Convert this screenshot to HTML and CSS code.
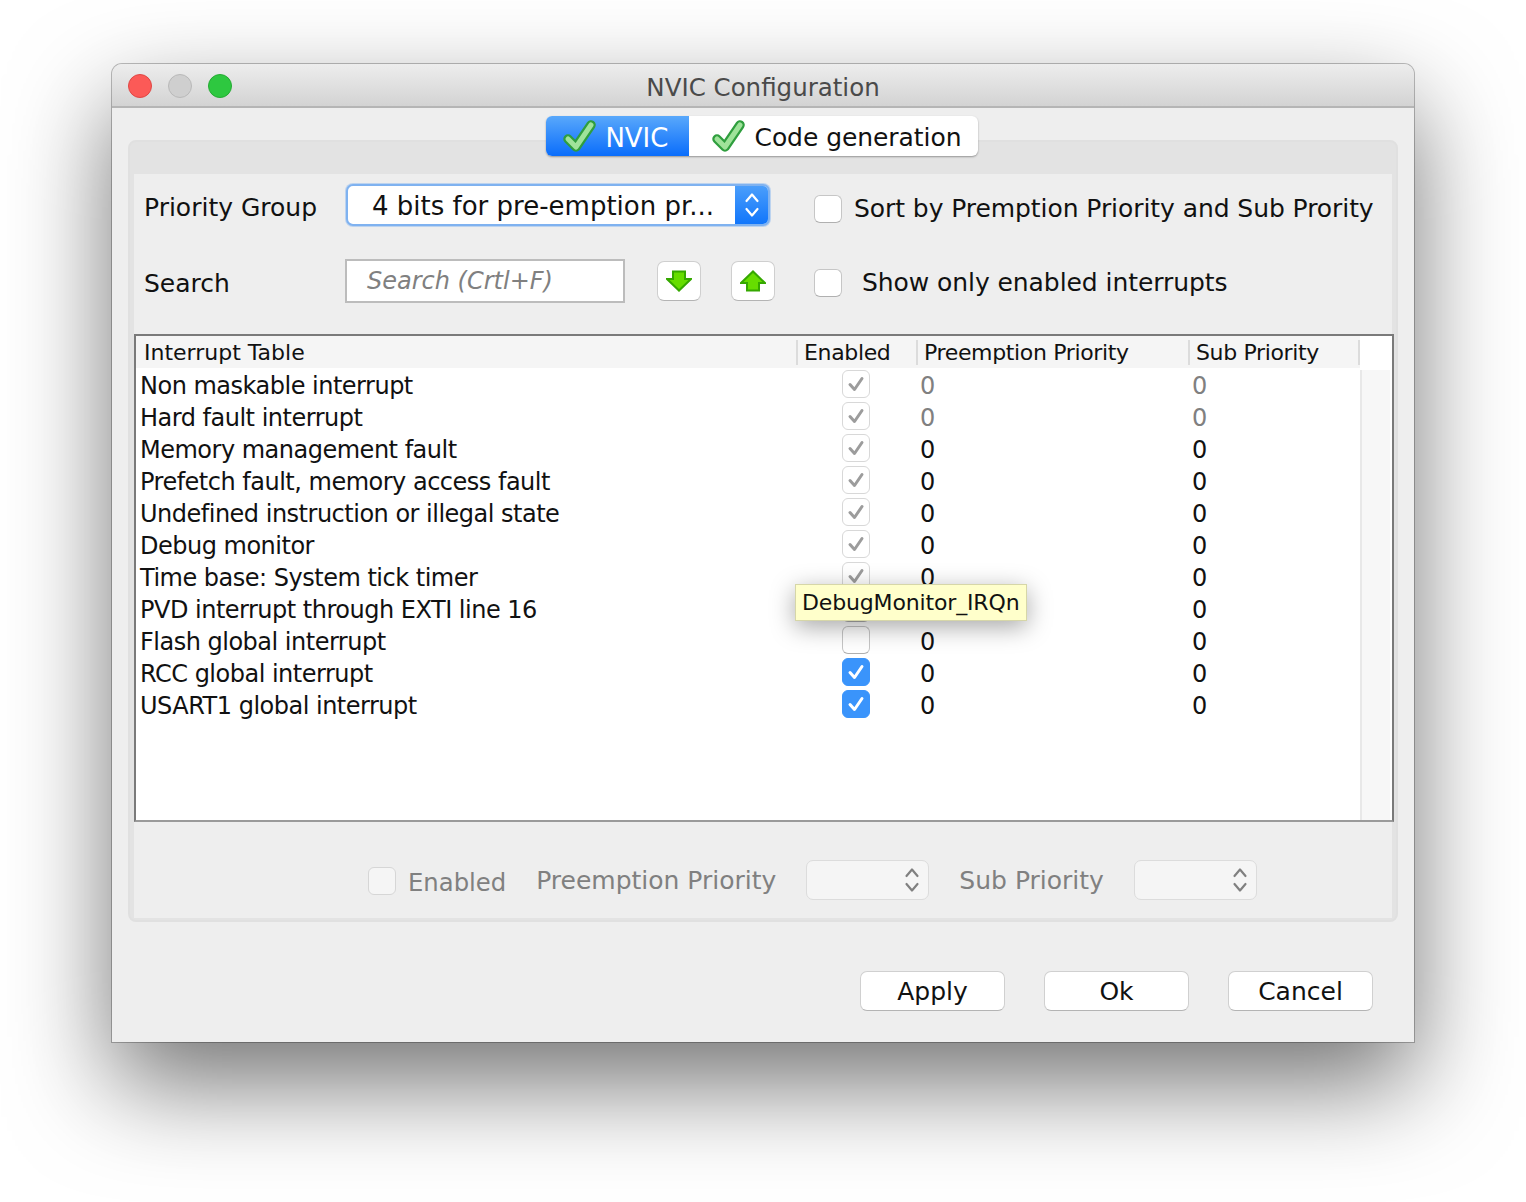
FILE: index.html
```html
<!DOCTYPE html>
<html lang="en">
<head>
  <meta charset="UTF-8" />
  <title>NVIC Configuration</title>
  <link rel="stylesheet" href="styles.css">
</head>
<body>
  <svg class="defs" width="0" height="0">
    <symbol id="tick" viewBox="0 0 34 34">
      <path d="M5 20 L13 28 L28 6" fill="none" stroke="#2f9e3e" stroke-width="9.5" stroke-linecap="round" stroke-linejoin="round"/>
      <path d="M5 20 L13 28 L28 6" fill="none" stroke="#9fe39a" stroke-width="5" stroke-linecap="round" stroke-linejoin="round"/>
    </symbol>
    <symbol id="mark" viewBox="0 0 20 20">
      <path d="M4 10.5 L8.5 15.5 L16 4.5" fill="none" stroke="currentColor" stroke-width="3" stroke-linecap="round" stroke-linejoin="round"/>
    </symbol>
    <symbol id="updown" viewBox="0 0 16 30">
      <path d="M2.5 11 L8 4.5 L13.5 11 M2.5 19 L8 25.5 L13.5 19" fill="none" stroke="currentColor" stroke-width="2.2" stroke-linecap="round" stroke-linejoin="round"/>
    </symbol>
  </svg>

  <div class="window">
    <div class="titlebar">
      <div class="lights">
        <span class="light red"></span>
        <span class="light grey"></span>
        <span class="light green"></span>
      </div>
      <div class="title">NVIC Configuration</div>
    </div>

    <div class="content">
      <div class="panel">
        <div class="tabs">
          <div class="tab active"><svg class="tab-icon"><use href="#tick"/></svg>NVIC</div>
          <div class="tab"><svg class="tab-icon"><use href="#tick"/></svg>Code generation</div>
        </div>

        <div class="inner">
          <div class="controls">
            <div class="label">Priority Group</div>
            <div class="combo">
              <span class="combo-text">4 bits for pre-emption pr...</span>
              <span class="combo-btn"><svg class="updown"><use href="#updown"/></svg></span>
            </div>
            <div class="box-option first">
              <span class="check"></span>
              <span>Sort by Premption Priority and Sub Prority</span>
            </div>

            <div class="label">Search</div>
            <div class="search-group">
              <div class="search">Search (Crtl+F)</div>
              <button class="arrow-btn">
                <svg width="26" height="22" viewBox="0 0 26 22"><path d="M7 1.5 H19 V9 H25 L13 20.5 L1 9 H7 Z" fill="#66dd00" stroke="#35a800" stroke-width="2"/></svg>
              </button>
              <button class="arrow-btn">
                <svg width="26" height="22" viewBox="0 0 26 22"><path d="M7 20.5 H19 V13 H25 L13 1.5 L1 13 H7 Z" fill="#66dd00" stroke="#35a800" stroke-width="2"/></svg>
              </button>
            </div>
            <div class="box-option second">
              <span class="check"></span>
              <span class="wide-gap">Show only enabled interrupts</span>
            </div>
          </div>

          <div class="table">
            <div class="thead">
              <div class="th first">Interrupt Table</div>
              <div class="th">Enabled</div>
              <div class="th">Preemption Priority</div>
              <div class="th">Sub Priority</div>
            </div>
            <div class="tbody">
              <div class="rows">
                <div class="row fixed"><span>Non maskable interrupt</span><span class="cell-check"><span class="check sm off"><svg><use href="#mark"/></svg></span></span><span class="num">0</span><span class="num">0</span></div>
                <div class="row fixed"><span>Hard fault interrupt</span><span class="cell-check"><span class="check sm off"><svg><use href="#mark"/></svg></span></span><span class="num">0</span><span class="num">0</span></div>
                <div class="row"><span>Memory management fault</span><span class="cell-check"><span class="check sm off"><svg><use href="#mark"/></svg></span></span><span class="num">0</span><span class="num">0</span></div>
                <div class="row"><span>Prefetch fault, memory access fault</span><span class="cell-check"><span class="check sm off"><svg><use href="#mark"/></svg></span></span><span class="num">0</span><span class="num">0</span></div>
                <div class="row"><span>Undefined instruction or illegal state</span><span class="cell-check"><span class="check sm off"><svg><use href="#mark"/></svg></span></span><span class="num">0</span><span class="num">0</span></div>
                <div class="row"><span>Debug monitor</span><span class="cell-check"><span class="check sm off"><svg><use href="#mark"/></svg></span></span><span class="num">0</span><span class="num">0</span></div>
                <div class="row"><span>Time base: System tick timer</span><span class="cell-check"><span class="check sm off"><svg><use href="#mark"/></svg></span></span><span class="num">0</span><span class="num">0</span></div>
                <div class="row"><span>PVD interrupt through EXTI line 16</span><span class="cell-check"><span class="check sm"></span></span><span class="num"></span><span class="num">0</span></div>
                <div class="row"><span>Flash global interrupt</span><span class="cell-check"><span class="check sm"></span></span><span class="num">0</span><span class="num">0</span></div>
                <div class="row"><span>RCC global interrupt</span><span class="cell-check"><span class="check sm on"><svg><use href="#mark"/></svg></span></span><span class="num">0</span><span class="num">0</span></div>
                <div class="row"><span>USART1 global interrupt</span><span class="cell-check"><span class="check sm on"><svg><use href="#mark"/></svg></span></span><span class="num">0</span><span class="num">0</span></div>
              </div>
              <div class="scrolltrack"></div>
            </div>
            <div class="tooltip">DebugMonitor_IRQn</div>
          </div>

          <div class="edit-row">
            <span class="check faded"></span>
            <span class="edit-enabled">Enabled</span>
            <span class="edit-label">Preemption Priority</span>
            <span class="spinner"><svg class="updown"><use href="#updown"/></svg></span>
            <span class="edit-label sub">Sub Priority</span>
            <span class="spinner"><svg class="updown"><use href="#updown"/></svg></span>
          </div>
        </div>
      </div>

      <div class="actions">
        <button class="btn">Apply</button>
        <button class="btn">Ok</button>
        <button class="btn">Cancel</button>
      </div>
    </div>
  </div>
</body>
</html>
```

FILE: styles.css
```css
* {
  box-sizing: border-box;
}
html, body {
  margin: 0;
  background: #fff;
}
body {
  padding: 64px 112px 0;
  height: 1202px;
  overflow: hidden;
  font-family: "DejaVu Sans", sans-serif;
  font-size: 25px;
  color: #111;
}
.defs {
  position: absolute;
}
.window {
  width: 1302px;
  height: 978px;
  background: #eee;
  border-radius: 10px 10px 0 0;
  box-shadow: 0 0 0 1px rgba(0,0,0,0.25), 0 42px 100px rgba(0,0,0,0.55);
}
.titlebar {
  height: 44px;
  position: relative;
  display: flex;
  align-items: center;
  justify-content: center;
  background: linear-gradient(#ededed, #d3d3d3);
  border-bottom: 2px solid #b5b5b5;
  border-radius: 10px 10px 0 0;
}
.lights {
  position: absolute;
  left: 16px;
  top: 10px;
  display: flex;
  gap: 16px;
}
.light {
  width: 24px;
  height: 24px;
  border-radius: 50%;
}
.light.red {
  background: #fc5a57;
  border: 1px solid #df4744;
}
.light.grey {
  background: #cfcfcf;
  border: 1px solid #b9b9b9;
}
.light.green {
  background: #2ec840;
  border: 1px solid #25ab33;
}
.title {
  color: #4a4a4a;
  font-size: 24.5px;
  padding-top: 5px;
}
.content {
  padding: 32px 16px 0;
}
.panel {
  height: 782px;
  background: #e3e3e3;
  border: 2px solid #e0e0e0;
  border-radius: 8px;
  padding: 0 4px 2px;
  display: flex;
  flex-direction: column;
}
.tabs {
  display: flex;
  align-self: center;
  height: 40px;
  margin-top: -26px;
  margin-left: -2px;
  background: #fff;
  border-radius: 6px;
  box-shadow: 0 1px 2px rgba(0,0,0,0.35);
}
.tab {
  display: flex;
  align-items: center;
  gap: 8px;
  padding: 3px 16px 0 23px;
  font-size: 25px;
  letter-spacing: -0.06px;
}
.tab.active {
  width: 143px;
  padding: 3px 0 0 17px;
  font-size: 26px;
  color: #fff;
  background: linear-gradient(#59a8fb, #0a6dfb);
  border-radius: 6px 0 0 6px;
}
.tab-icon {
  width: 34px;
  height: 34px;
  flex: none;
  margin-top: -3px;
}
.inner {
  flex: 1;
  margin-top: 18px;
  background: #eee;
  display: flex;
  flex-direction: column;
}
.controls {
  display: grid;
  grid-template-columns: 202px 468px 1fr;
  grid-template-rows: 42px 44px;
  row-gap: 33px;
  padding: 10px 0 0 10px;
  align-items: center;
}
.label {
  padding-top: 4px;
  white-space: nowrap;
}
.combo {
  height: 42px;
  width: 424px;
  display: flex;
  background: #fff;
  border: 2px solid #7fb2f0;
  border-radius: 7px;
  box-shadow: 0 0 0 1px rgba(127,178,240,0.45);
  overflow: hidden;
}
.combo-text {
  flex: 1;
  padding-left: 24px;
  padding-top: 2px;
  font-size: 26px;
  line-height: 36px;
  white-space: nowrap;
}
.combo-btn {
  width: 33px;
  display: flex;
  align-items: center;
  justify-content: center;
  color: #fff;
  background: linear-gradient(#4a9efb, #1176fb);
}
.updown {
  width: 16px;
  height: 30px;
}
.box-option {
  display: flex;
  align-items: center;
  gap: 12px;
  white-space: nowrap;
  letter-spacing: -0.07px;
}
.box-option.first {
  padding-top: 7px;
}
.box-option.second {
  padding-top: 3px;
}
.box-option .wide-gap {
  margin-left: 8px;
}
.check {
  width: 28px;
  height: 28px;
  flex: none;
  display: flex;
  align-items: center;
  justify-content: center;
  background: #fff;
  border: 1px solid #c6c6c6;
  border-bottom-color: #b0b0b0;
  border-radius: 6px;
}
.check svg {
  width: 20px;
  height: 20px;
}
.check.sm {
  color: #9c9c9c;
}
.check.off {
  border-color: #d8d8d8;
}
.check.on {
  background: #3a94fb;
  border-color: #3a94fb;
  color: #fff;
}
.check.faded {
  background: #f5f5f5;
  border-color: #d6d6d6;
  margin-top: 2px;
}
.search-group {
  display: flex;
  align-items: center;
}
.search {
  width: 280px;
  height: 44px;
  margin-left: -1px;
  padding-left: 20px;
  line-height: 41px;
  font-size: 24px;
  font-style: italic;
  color: #808080;
  background: #fff;
  border: 2px solid #bcbcbc;
}
.arrow-btn {
  width: 44px;
  height: 40px;
  margin-left: 32px;
  padding: 0;
  display: flex;
  align-items: center;
  justify-content: center;
  background: #fff;
  border: 1px solid #cfcfcf;
  border-bottom-color: #b4b4b4;
  border-radius: 7px;
}
.arrow-btn + .arrow-btn {
  margin-left: 30px;
}
.table {
  position: relative;
  height: 488px;
  margin: 31px 0 0;
  width: 1260px;
  background: #fff;
  border: 2px solid #7a7a7a;
  border-bottom-color: #9a9a9a;
}
.thead {
  display: grid;
  grid-template-columns: 660px 120px 272px 172px;
  width: 1224px;
  height: 32px;
  background: #f5f5f5;
  font-size: 22px;
  letter-spacing: -0.35px;
}
.th {
  padding-left: 6px;
  border-left: 2px solid #dcdcdc;
  margin: 4px 0;
  line-height: 25px;
  white-space: nowrap;
}
.th.first {
  border-left: none;
  padding-left: 8px;
  letter-spacing: 0;
}
.th:last-child {
  border-right: 2px solid #dcdcdc;
}
.tbody {
  display: flex;
  height: 452px;
}
.rows {
  width: 1224px;
}
.row {
  display: grid;
  grid-template-columns: 661px 120px 272px 171px;
  height: 32px;
  padding-top: 4px;
  align-items: center;
  font-size: 24px;
  letter-spacing: -0.5px;
  white-space: nowrap;
}
.row > span:first-child {
  padding-left: 4px;
}
.cell-check {
  display: flex;
  padding-left: 45px;
  margin-top: -4px;
}
.num {
  padding-left: 3px;
}
.row.fixed .num {
  color: #808080;
}
.scrolltrack {
  flex: none;
  width: 30px;
  margin-top: 2px;
  background: #f7f7f7;
  border-left: 2px solid #e8e8e8;
}
.tooltip {
  position: absolute;
  left: 659px;
  top: 248px;
  width: 232px;
  height: 37px;
  padding-left: 6px;
  line-height: 35px;
  font-size: 22px;
  letter-spacing: -0.15px;
  white-space: nowrap;
  background: #ffffcb;
  border: 1px solid #d6d6a8;
  box-shadow: 0 6px 24px rgba(0,0,0,0.35);
}
.edit-row {
  display: flex;
  align-items: center;
  margin-top: 38px;
  height: 40px;
  padding-left: 234px;
  color: #808080;
}
.edit-enabled {
  margin-left: 12px;
  padding-top: 4px;
  font-size: 24.3px;
}
.edit-label {
  margin-left: 30px;
}
.spinner {
  width: 123px;
  height: 40px;
  margin-left: 30px;
  display: flex;
  align-items: center;
  justify-content: flex-end;
  padding-right: 8px;
  color: #808080;
  background: #f5f5f5;
  border: 1px solid #dcdcdc;
  border-radius: 7px;
}
.actions {
  display: flex;
  justify-content: flex-end;
  gap: 39px;
  margin-top: 49px;
  padding-right: 25px;
}
.btn {
  width: 145px;
  height: 40px;
  padding: 0;
  font-family: inherit;
  font-size: 25px;
  color: #111;
  background: #fff;
  border: 1px solid #d0d0d0;
  border-bottom-color: #b4b4b4;
  border-radius: 7px;
}
```
